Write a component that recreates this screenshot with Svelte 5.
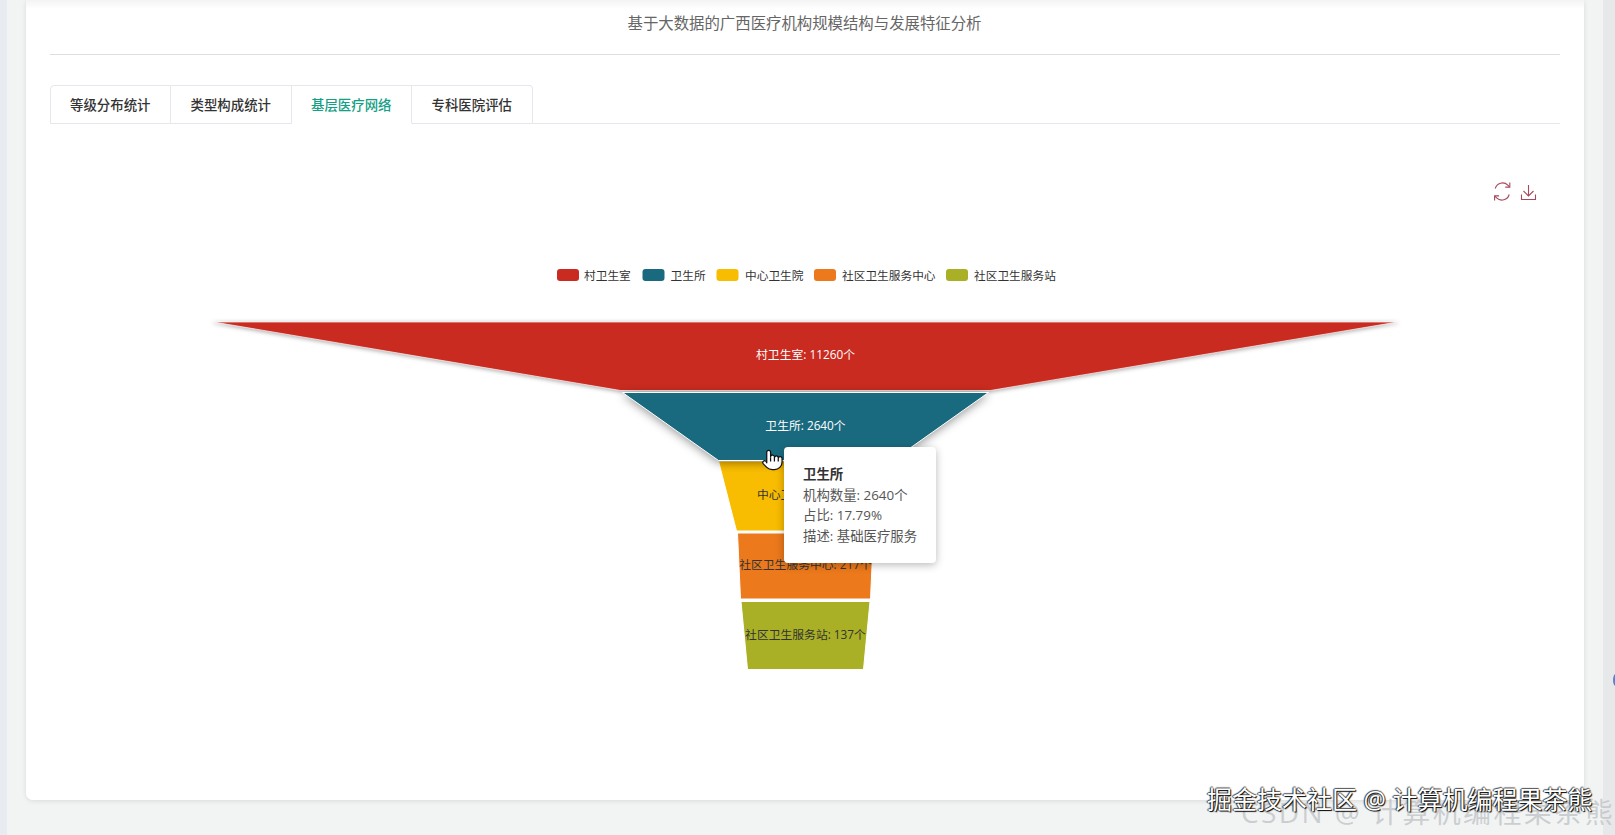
<script lang="ts">
    const tabs = ["等级分布统计", "类型构成统计", "基层医疗网络", "专科医院评估"];
    let activeTab = 2;

    const legend = [
        { name: "村卫生室", color: "#c92b20", x: 556.5, tx: 583.5 },
        { name: "卫生所", color: "#1a6a7f", x: 642, tx: 670 },
        { name: "中心卫生院", color: "#f8bc00", x: 716, tx: 744.5 },
        { name: "社区卫生服务中心", color: "#ec791b", x: 813.5, tx: 841.5 },
        { name: "社区卫生服务站", color: "#a9b026", x: 945.5, tx: 973.5 }
    ];

    const funnel = [
        { label: "村卫生室: 11260个", color: "#c92b20", text: "#fff", y: 353, points: "213,321 1397,321 990,389.5 620,389.5", cls: "seg shadow" },
        { label: "中心卫生院: 586个", color: "#f8bc00", text: "#333", y: 493, points: "718,460 892,460 874,530 736,530", cls: "seg" },
        { label: "社区卫生服务中心: 217个", color: "#ec791b", text: "#333", y: 563, points: "737,532 873,532 870,598 740,598", cls: "seg" },
        { label: "社区卫生服务站: 137个", color: "#a9b026", text: "#333", y: 633, points: "740.5,600.5 869.5,600.5 863,668.5 747,668.5", cls: "seg" },
        // hovered item goes last so its shadow stays on top of the neighbours
        { label: "卫生所: 2640个", color: "#1a6a7f", text: "#fff", y: 424, points: "622,391.5 988,391.5 892,459.5 718,459.5", cls: "seg hover" }
    ];

    const tooltip = ["机构数量: 2640个", "占比: 17.79%", "描述: 基础医疗服务"];
</script>

<div class="page">
    <div class="rail"></div>
    <main class="card">
        <header class="head">基于大数据的广西医疗机构规模结构与发展特征分析</header>

        <div class="tabs">
            {#each tabs as tab, i}
                <button class="tab" class:active={i === activeTab} onclick={() => (activeTab = i)}>{tab}</button>
            {/each}
        </div>

        <div class="chart">
            <svg viewBox="49.5 123 1510 660" width="1510" height="660" role="img" aria-label="基层医疗网络漏斗图">
                <!-- toolbox -->
                <g class="tool">
                    <path d="M1494.7 187.5a7.6 7.6 0 0 1 12.6-3.4l1.8 1.8" />
                    <path d="M1509.3 181.6v4.5h-4.5" />
                    <path d="M1508.7 193.5a7.6 7.6 0 0 1-12.6 3.4l-1.8-1.8" />
                    <path d="M1494.1 199.4v-4.5h4.5" />
                    <path d="M1528 184v11" />
                    <path d="M1523 190l5 5 5-5" />
                    <path d="M1521 193.5v5h14v-5" />
                </g>

                <!-- legend -->
                {#each legend as item}
                    <rect x={item.x} y="268" width="22" height="12" rx="3" fill={item.color} />
                    <text class="legend" x={item.tx} y="273.5">{item.name}</text>
                {/each}

                <!-- funnel -->
                {#each funnel as seg}
                    <polygon class={seg.cls} points={seg.points} fill={seg.color} />
                    <text class="label" x="805" y={seg.y} fill={seg.text}>{seg.label}</text>
                {/each}
            </svg>

            <svg class="hand" viewBox="0 0 24 24" width="23" height="24" aria-hidden="true">
                <path d="M6 4a2 2 0 0 1 4 0v4.6a2 2 0 0 1 4 .4v.6a2 2 0 0 1 4 .4v.4a2 2 0 0 1 4 0v3.6a8 8 0 0 1-8 8h-2c-2.8 0-4.5-.86-6-2.34l-3.6-3.6a2 2 0 0 1 2.83-2.82L6 15z" />
                <path d="M10 9v4.5M14 10v3.5M18 11v2.5" />
            </svg>

            <div class="tooltip">
                <strong>卫生所</strong>
                {#each tooltip as line}
                    <span>{line}</span>
                {/each}
            </div>
        </div>
    </main>
    <div class="rail-right"></div>

    <div class="edge-dot"></div>
    <div class="mark-csdn">CSDN @ 计算机编程果茶熊</div>
    <div class="mark-juejin">掘金技术社区 @ 计算机编程果茶熊</div>
</div>

<style>
    :global(body) {
        margin: 0;
        background: #f2f3f3;
        font-family: "Open Sans", "Noto Sans CJK SC", "Liberation Sans", sans-serif;
        overflow: hidden;
    }

    .page {
        position: relative;
        display: flex;
        align-items: flex-start;
        width: 1615px;
        height: 835px;
        overflow: hidden;
        background: #f2f3f3;
    }

    .rail {
        flex: none;
        width: 7px;
        height: 835px;
        margin-right: 19px;
        background: #e8ebef;
    }

    .rail-right {
        flex: none;
        width: 12px;
        height: 835px;
        margin-left: 19px;
        background: #e6e8ea;
    }

    .card {
        flex: none;
        box-sizing: border-box;
        width: 1558px;
        height: 800px;
        padding: 0 24.5px 0 23.5px;
        background: linear-gradient(#f3f3f3, #fff 9px);
        border-radius: 0 0 7px 7px;
        box-shadow: 0 1px 5px rgba(0, 0, 0, 0.1);
    }

    .head {
        box-sizing: border-box;
        height: 55px;
        padding-top: 13px;
        font-size: 15.4px;
        line-height: 22px;
        text-align: center;
        color: #666;
        border-bottom: 1px solid #dcdee1;
    }

    .tabs {
        display: flex;
        box-sizing: border-box;
        height: 39px;
        margin-top: 30px;
        border-bottom: 1px solid #e4e7ed;
    }

    .tab {
        box-sizing: border-box;
        width: 120.5px;
        height: 39px;
        padding: 0 0 2px;
        font: 500 13.4px "Open Sans", "Noto Sans CJK SC", sans-serif;
        color: #333;
        background: #fff;
        border: 1px solid #e4e7ed;
        border-left: none;
        cursor: pointer;
    }

    .tab:first-child {
        width: 121.5px;
        border-left: 1px solid #e4e7ed;
        border-top-left-radius: 4px;
    }

    .tab:last-child {
        border-top-right-radius: 4px;
    }

    .tab.active {
        color: #13a085;
        border-bottom-color: #fff;
    }

    .chart {
        position: relative;
        height: 660px;
    }

    .chart > svg:first-child {
        display: block;
    }

    .tool path {
        fill: none;
        stroke: #a8485c;
        stroke-width: 1.1;
    }

    .legend {
        font-size: 11.7px;
        fill: #333;
        dominant-baseline: central;
    }

    .label {
        font-size: 11.8px;
        text-anchor: middle;
        dominant-baseline: central;
    }

    .seg {
        stroke: #fff;
        stroke-width: 1;
    }

    .seg.shadow {
        stroke: rgba(255, 255, 255, 0.7);
        filter: drop-shadow(0 1px 2px rgba(0, 0, 0, 0.35));
    }

    .seg.hover {
        filter: drop-shadow(0 2px 5px rgba(0, 0, 0, 0.4));
    }

    .hand {
        position: absolute;
        left: 711px;
        top: 324px;
    }

    .hand path {
        fill: #fff;
        stroke: #111;
        stroke-width: 1.3;
        stroke-linejoin: round;
    }

    .tooltip {
        position: absolute;
        left: 734.5px;
        top: 323px;
        box-sizing: border-box;
        display: flex;
        flex-direction: column;
        width: 152px;
        height: 116px;
        padding: 17px 0 0 19px;
        font-size: 13.4px;
        line-height: 20.6px;
        color: #555;
        background: #fff;
        border-radius: 4px;
        box-shadow: 0 2px 8px rgba(0, 0, 0, 0.28);
    }

    .tooltip strong {
        color: #333;
    }

    .edge-dot {
        position: absolute;
        left: 1613px;
        top: 673px;
        width: 8px;
        height: 14px;
        border-radius: 50%;
        background: #5b7fd0;
    }

    .mark-csdn {
        position: absolute;
        left: 1241px;
        top: 794px;
        font-size: 28px;
        line-height: 36px;
        letter-spacing: 2.4px;
        white-space: nowrap;
        color: rgba(185, 190, 193, 0.7);
    }

    .mark-juejin {
        position: absolute;
        left: 1207px;
        top: 782px;
        font-size: 25px;
        line-height: 34px;
        white-space: nowrap;
        color: #fff;
        text-shadow: 1px 1px 1px #000, -1px 0 1px #333, 0 -1px 1px #555;
    }
</style>
